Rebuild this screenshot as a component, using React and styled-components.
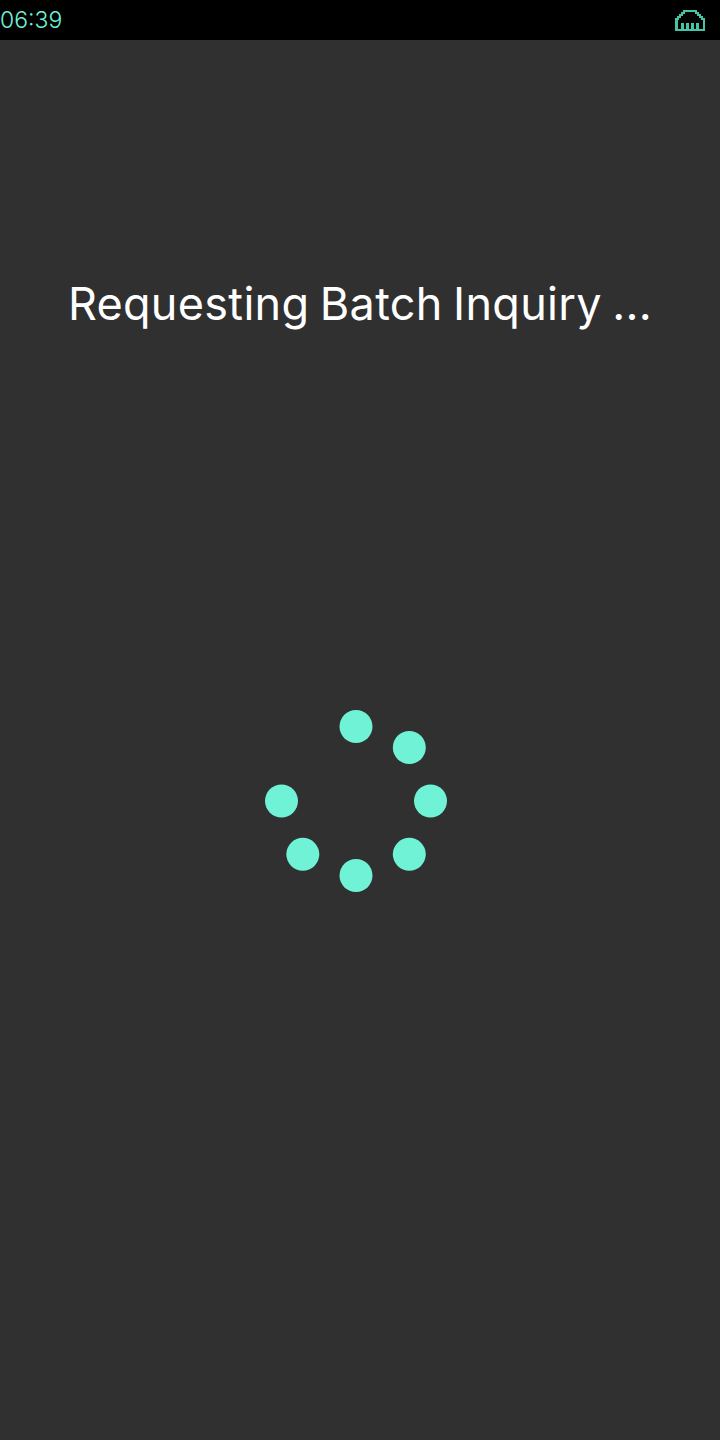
import React from "react";
import styled, { createGlobalStyle } from "styled-components";

const Global = createGlobalStyle`
  html, body { margin: 0; padding: 0; background: #303030; }
  * { box-sizing: border-box; }
`;

const Screen = styled.div`
  width: 720px;
  height: 1440px;
  background: #303030;
  display: flex;
  flex-direction: column;
  font-family: Inter, "Liberation Sans", sans-serif;
  overflow: hidden;
`;

const StatusBar = styled.header`
  height: 40px;
  background: #000;
  display: flex;
  align-items: center;
  justify-content: space-between;
  padding: 0 15px 0 0;
  flex: none;
`;

const Clock = styled.span`
  color: #6ff2d6;
  font-size: 23px;
  font-weight: 300;
  line-height: 40px;
`;

const Title = styled.h1`
  margin: 236px 0 0;
  color: #fff;
  font-size: 45px;
  font-weight: 400;
  line-height: 56px;
  text-align: center;
  letter-spacing: 0.3px;
  word-spacing: -2.5px;
  white-space: nowrap;
`;

const SpinnerWrap = styled.div`
  margin: 370px 0 0 257px;
  width: 198px;
  height: 198px;
`;

const NetworkIcon = () => (
  <svg width="30" height="22" viewBox="0 0 30 22" fill="none" shapeRendering="crispEdges">
    <path
      d="M1.25 20.75 V10 H3 V8 H5 V6 H7 V4 H9 V1.75 H21 V4 H23 V6 H25 V8 H27 V10 H28.75 V20.75 Z"
      stroke="#45c4a6"
      strokeWidth="2.5"
    />
    <path d="M7.5 20 V14 M12.5 20 V14 M17.5 20 V14 M22.5 20 V14" stroke="#45c4a6" strokeWidth="3" />
  </svg>
);

const DOTS = [
  [99, 24.5],
  [152.3, 45.5],
  [173.5, 99],
  [152.3, 152.3],
  [99, 173.5],
  [45.8, 152.3],
  [24.5, 99],
];

const Spinner = () => (
  <svg width="198" height="198" viewBox="0 0 198 198">
    {DOTS.map(([cx, cy]) => (
      <circle key={`${cx}-${cy}`} cx={cx} cy={cy} r="16.5" fill="#6ff2d6" />
    ))}
  </svg>
);

export default function App() {
  return (
    <Screen>
      <Global />
      <StatusBar>
        <Clock>06:39</Clock>
        <NetworkIcon />
      </StatusBar>
      <Title>Requesting Batch Inquiry ...</Title>
      <SpinnerWrap>
        <Spinner />
      </SpinnerWrap>
    </Screen>
  );
}
